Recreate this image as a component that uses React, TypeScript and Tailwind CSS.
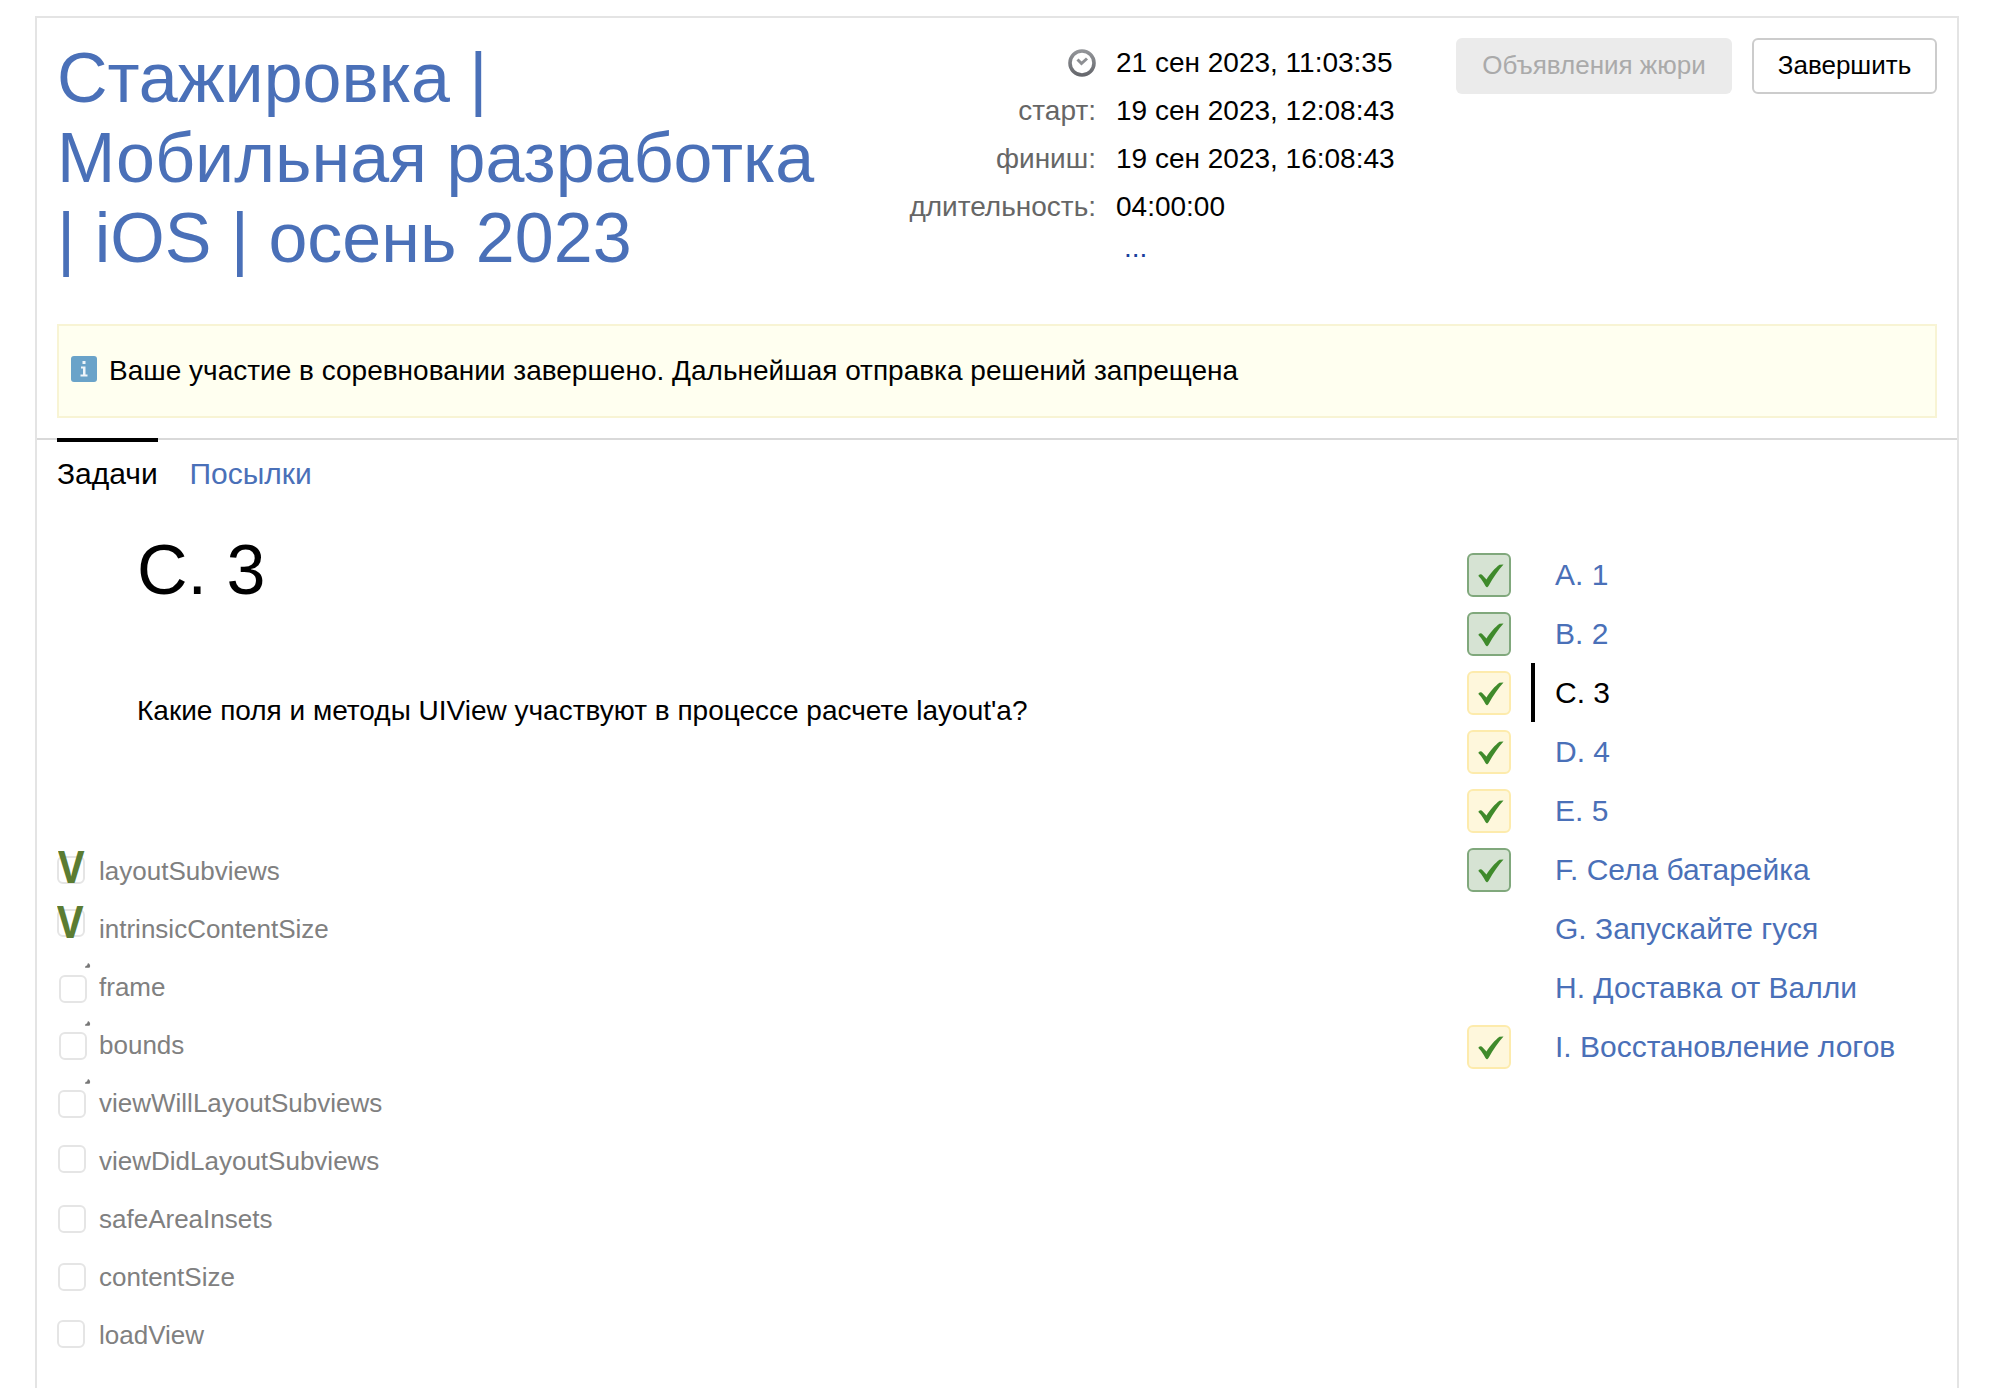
const answers = [
  { label: "layoutSubviews", pos: "left-0 top-0", mark: "v1" },
  { label: "intrinsicContentSize", pos: "left-0 -top-[5px]", mark: "v2" },
  { label: "frame", pos: "left-[2px] top-[3px]", mark: "tick" },
  { label: "bounds", pos: "left-[2px] top-[2px]", mark: "tick" },
  { label: "viewWillLayoutSubviews", pos: "left-px top-[2px]", mark: "tick" },
  { label: "viewDidLayoutSubviews", pos: "left-px -top-px", mark: "" },
  { label: "safeAreaInsets", pos: "left-px top-px", mark: "" },
  { label: "contentSize", pos: "left-px top-px", mark: "" },
  { label: "loadView", pos: "left-0 top-0", mark: "" },
];

const problems = [
  { label: "A. 1", state: "full" },
  { label: "B. 2", state: "full" },
  { label: "C. 3", state: "partial", current: true },
  { label: "D. 4", state: "partial" },
  { label: "E. 5", state: "partial" },
  { label: "F. Села батарейка", state: "full" },
  { label: "G. Запускайте гуся", state: "" },
  { label: "H. Доставка от Валли", state: "" },
  { label: "I. Восстановление логов", state: "partial" },
];

function ClockIcon() {
  return (
    <svg width="28" height="28" viewBox="0 0 28 28" fill="none">
      <defs>
        <linearGradient id="ring" x1="0" y1="0" x2="0" y2="1">
          <stop offset="0" stopColor="#929498" />
          <stop offset="1" stopColor="#66686d" />
        </linearGradient>
      </defs>
      <circle cx="14" cy="14" r="12" stroke="url(#ring)" strokeWidth="3.6" />
      <path d="M9.500 10.500 L13.500 14.500 L19 9.500" stroke="#8d8f93" strokeWidth="3" />
    </svg>
  );
}

function InfoIcon() {
  return (
    <svg width="26" height="26" viewBox="0 0 26 26">
      <rect width="26" height="26" rx="3" fill="#6aa3c9" />
      <path d="M11.500 5h3v3h-3z M10 10.500h4.500v8H16.500v2H9.500v-2h2.500v-6H10z" fill="#eef5fa" />
    </svg>
  );
}

function CheckIcon() {
  return (
    <svg className="absolute left-[9px] top-[9px]" width="28" height="26" viewBox="0 0 28 26">
      <path
        d="M0.800 11 C2.300 9.800 3.500 10 4.500 11.200 L8.500 15.500 C12 10 17 4 21.500 0.800 L25.500 0.500 C20.500 6 15 14 10.800 21.500 C9.500 23.800 8.300 23.800 7.300 21.800 C5.500 18.500 3.500 15 1.300 13 C0.500 12.300 0.300 11.500 0.800 11Z"
        fill="#3f8a2b"
      />
    </svg>
  );
}

function Meta({ label, value }: { label: React.ReactNode; value: string }) {
  return (
    <div className="flex h-12 items-center">
      <div className="flex w-[188px] justify-end text-[#666666]">{label}</div>
      <div className="ml-5">{value}</div>
    </div>
  );
}

export default function App() {
  return (
    <div className="h-[1388px] w-[1992px] overflow-hidden bg-white pl-[35px] pt-4 font-['Liberation_Sans',Arial,sans-serif] text-[28px] text-black">
      <div className="h-[1400px] w-[1924px] border-2 border-[#e4e4e4]">
        <header className="flex h-[306px] pl-5">
          <h1 className="w-[780px] pt-5 text-[70px] leading-[80px] text-[#4a70b8]">
            Стажировка |<br />Мобильная разработка<br />| iOS | осень 2023
          </h1>
          <div className="ml-[71px] w-[508px] whitespace-nowrap pt-[21px]">
            <Meta label={<div className="-mt-px"><ClockIcon /></div>} value="21 сен 2023, 11:03:35" />
            <Meta label="старт:" value="19 сен 2023, 12:08:43" />
            <Meta label="финиш:" value="19 сен 2023, 16:08:43" />
            <Meta label="длительность:" value="04:00:00" />
            <div className="pl-[216px] pt-px leading-8 text-[#1a3f9e]">...</div>
          </div>
          <div className="ml-10 flex shrink-0 gap-5 pt-5 text-[26px]">
            <button className="h-14 w-[276px] whitespace-nowrap rounded-md bg-[#ebebeb] pb-0.5 text-[#aaaaaa]">Объявления жюри</button>
            <button className="h-14 w-[185px] rounded-md border-2 border-[#cccccc] pb-0.5">Завершить</button>
          </div>
        </header>

        <div className="mx-5 flex h-[94px] items-center border-2 border-[#f8f4d4] bg-[#fffff0] pl-3">
          <div className="-mt-1"><InfoIcon /></div>
          <div className="ml-3">Ваше участие в соревновании завершено. Дальнейшая отправка решений запрещена</div>
        </div>

        <nav className="mt-5 flex h-[60px] gap-8 border-t-2 border-[#d9d9d9] pl-5 text-[30px] leading-[34px]">
          <div className="-mt-0.5 w-[101px] border-t-4 border-black pt-[15px]">Задачи</div>
          <div className="-ml-[0.5px] pt-[17px] text-[#4a70b8]">Посылки</div>
        </nav>

        <main className="flex justify-between">
          <section className="pl-5">
            <h2 className="ml-20 pt-8 text-[70px] leading-[80px]">C. 3</h2>
            <p className="ml-20 mt-[85px] leading-8">Какие поля и методы UIView участвуют в процессе расчете layout'а?</p>
            <ul className="mt-[129px] text-[26px] text-[#808080]">
              {answers.map((a) => (
                <li key={a.label} className="relative flex h-[58px]">
                  <span className={`absolute size-7 rounded-[6px] border-2 border-[#e5e5e5] bg-white ${a.pos}`} />
                  {a.mark === "v1" && <span className="absolute left-px -top-[22px] origin-left scale-x-[0.9] font-['Noto_Sans',sans-serif] text-[45px] font-bold leading-[64px] text-[#5b7c32]">V</span>}
                  {a.mark === "v2" && <span className="absolute left-0 -top-[25px] origin-left scale-x-[0.9] font-['Noto_Sans',sans-serif] text-[45px] font-bold leading-[64px] text-[#5b7c32]">V</span>}
                  {a.mark === "tick" && (
                    <svg className="absolute left-7 -top-[9px]" width="6" height="5" viewBox="0 0 6 5">
                      <path d="M0 4.800 L0.500 3 L2 2.500 L3 0 L4.500 1 L5.200 3 L4.500 4.800Z" fill="#777777" />
                    </svg>
                  )}
                  <span className="ml-[42px] leading-[30px]">{a.label}</span>
                </li>
              ))}
            </ul>
          </section>

          <aside className="mr-[38px] w-[452px] pt-[47px] text-[30px]">
            {problems.map((p) => (
              <div key={p.label} className="flex h-[59px] items-center">
                {p.state === "full" && (
                  <div className="relative mt-px size-11 rounded-md border-2 border-[#80a87c] bg-[#d6e3d3]"><CheckIcon /></div>
                )}
                {p.state === "partial" && (
                  <div className="relative mt-px size-11 rounded-md border-2 border-[#fdebac] bg-[#fef7dc]"><CheckIcon /></div>
                )}
                {p.state === "" && <div className="size-11" />}
                <div
                  className={
                    p.current
                      ? "ml-5 h-full border-l-4 border-black pl-5 leading-[59px]"
                      : "ml-5 h-full pl-6 leading-[59px] text-[#4a70b8]"
                  }
                >
                  {p.label}
                </div>
              </div>
            ))}
          </aside>
        </main>
      </div>
    </div>
  );
}
